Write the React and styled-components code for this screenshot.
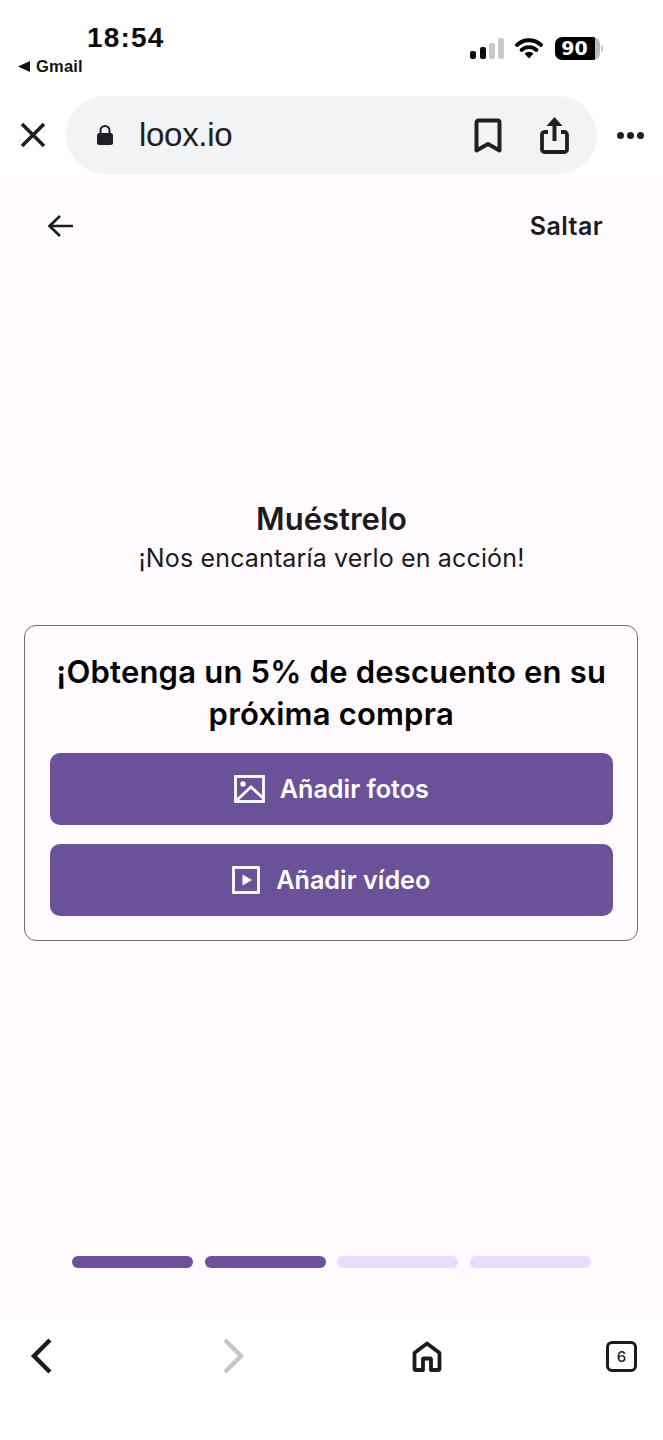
import React from 'react';
import styled, { createGlobalStyle } from 'styled-components';

const GlobalStyle = createGlobalStyle`
    html, body {
        margin: 0;
        padding: 0;
        background: #ffffff;
    }
    * {
        box-sizing: border-box;
    }
`;

const Screen = styled.div`
    width: 663px;
    height: 1440px;
    display: flex;
    flex-direction: column;
    font-family: Inter, "Liberation Sans", sans-serif;
    color: #1c1b1f;
    overflow: hidden;
`;

const StatusBar = styled.div`
    height: 96px;
    display: flex;
    justify-content: space-between;
    background: #ffffff;
`;

const StatusLeft = styled.div`
    display: flex;
    flex-direction: column;
    padding-top: 21px;
`;

const Time = styled.div`
    margin-left: 87px;
    font-family: "Liberation Sans", sans-serif;
    font-size: 28px;
    line-height: 33px;
    font-weight: 700;
    letter-spacing: 1.2px;
    color: #0d0d0d;
`;

const BackApp = styled.div`
    margin-left: 18px;
    margin-top: 3px;
    display: flex;
    align-items: center;
    gap: 5px;
    font-family: "Liberation Sans", sans-serif;
    font-size: 16.5px;
    letter-spacing: 0.2px;
    line-height: 19px;
    font-weight: 700;
    color: #141414;
`;

const StatusRight = styled.div`
    display: flex;
    align-items: center;
    height: 23px;
    margin-top: 37px;
    margin-right: 63px;
`;

const Wifi = styled.svg`
    margin: 0 12px 0 11px;
`;

const Battery = styled.div`
    position: relative;
    width: 45px;
    height: 23px;
    border-radius: 7px;
    background: linear-gradient(90deg, #000000 88%, #b9b9b9 88%);
    color: #ffffff;
    font-family: "DejaVu Sans", sans-serif;
    font-size: 19px;
    font-weight: 700;
    line-height: 23px;
    text-align: center;
    padding-right: 6px;

    &::after {
        content: '';
        position: absolute;
        top: 8px;
        right: -3px;
        width: 2px;
        height: 7px;
        border-radius: 0 2px 2px 0;
        background: #c9c9c9;
    }
`;

const Toolbar = styled.div`
    height: 81px;
    display: flex;
    align-items: flex-start;
    background: #ffffff;
`;

const CloseSlot = styled.div`
    width: 66px;
    height: 78px;
    display: flex;
    align-items: center;
    padding-left: 20px;
`;

const AddressPill = styled.div`
    width: 531px;
    height: 78px;
    border-radius: 39px;
    background: #f2f3f5;
    display: flex;
    align-items: center;
    padding: 0 28px 0 31px;
`;

const Domain = styled.div`
    margin-left: 26px;
    flex: 1;
    font-family: "Liberation Sans", sans-serif;
    font-size: 33px;
    letter-spacing: -0.3px;
    color: #1f2024;
`;

const PillActions = styled.div`
    display: flex;
    align-items: center;
    gap: 38px;
`;

const MoreSlot = styled.div`
    flex: 1;
    height: 78px;
    display: flex;
    align-items: center;
    justify-content: center;
    gap: 3px;
`;

const Dot = styled.span`
    width: 7px;
    height: 7px;
    border-radius: 50%;
    background: #1f2024;
`;

const Page = styled.main`
    flex: 1;
    display: flex;
    flex-direction: column;
    background: #fffbff;
`;

const TopRow = styled.div`
    display: flex;
    align-items: center;
    justify-content: space-between;
    height: 32px;
    margin-top: 33px;
    padding: 0 60px 0 47px;
`;

const Skip = styled.div`
    font-size: 25px;
    letter-spacing: 0.4px;
    font-weight: 600;
    color: #1c1b1f;
`;

const Title = styled.h1`
    margin: 258px 0 0;
    font-size: 31px;
    line-height: 38px;
    font-weight: 600;
    text-align: center;
    color: #1c1b1f;
`;

const Subtitle = styled.p`
    margin: 3px 0 0;
    font-size: 25px;
    letter-spacing: 0.15px;
    line-height: 34px;
    font-weight: 400;
    text-align: center;
    color: #1c1b1f;
`;

const Card = styled.section`
    margin: 50px 25px 0 24px;
    height: 316px;
    padding: 25px 24px 0 24.5px;
    border: 1.5px solid #6f6a75;
    border-radius: 12px;
    display: flex;
    flex-direction: column;
`;

const CardTitle = styled.h2`
    margin: 0 0 18px;
    font-size: 31px;
    letter-spacing: 0.2px;
    line-height: 42px;
    font-weight: 600;
    text-align: center;
    color: #000000;
`;

const ActionButton = styled.button`
    height: 72px;
    flex: none;
    margin-bottom: 19px;
    border: 0;
    border-radius: 10px;
    background: #6b5198;
    color: #ffffff;
    font-family: inherit;
    font-size: 25.2px;
    font-weight: 600;
    display: flex;
    align-items: center;
    justify-content: center;
    gap: ${(p) => p.$gap}px;
`;

const Progress = styled.div`
    margin: 315px 72px 0;
    display: grid;
    grid-template-columns: repeat(4, 121px);
    justify-content: space-between;
`;

const Step = styled.div`
    height: 12px;
    border-radius: 6px;
    background: ${(p) => (p.$done ? '#6b5198' : '#eadcfb')};
`;

const BottomBar = styled.nav`
    height: 119px;
    background: #ffffff;
    display: flex;
    align-items: flex-start;
    justify-content: space-between;
    padding: 13px 26px 0 30px;
`;

const NavSlot = styled.div`
    width: ${(p) => p.$w}px;
    height: 44px;
    margin-left: ${(p) => p.$ml || 0}px;
    display: flex;
    align-items: center;
    justify-content: center;
`;

const TabCount = styled.div`
    width: 31px;
    height: 31px;
    border: 3px solid #1c1c1c;
    border-radius: 6px;
    font-size: 15px;
    font-weight: 500;
    line-height: 25px;
    text-align: center;
    color: #1c1c1c;
`;

const App = () => {
    return (
        <Screen>
            <GlobalStyle />
            <StatusBar>
                <StatusLeft>
                    <Time>18:54</Time>
                    <BackApp>
                        <svg width="13" height="11" viewBox="0 0 13 11">
                            <path d="M0 5.5 12 0v11z" fill="#141414" />
                        </svg>
                        Gmail
                    </BackApp>
                </StatusLeft>
                <StatusRight>
                    <svg width="34" height="21" viewBox="0 0 34 21">
                        <rect x="0" y="13" width="6" height="8" rx="2" fill="#0d0d0d" />
                        <rect x="10" y="9" width="6" height="12" rx="2" fill="#0d0d0d" />
                        <rect x="19" y="5" width="6" height="16" rx="2" fill="#c9c9c9" />
                        <rect x="28" y="0" width="6" height="21" rx="2" fill="#c9c9c9" />
                    </svg>
                    <Wifi width="28" height="21" viewBox="0 0 28 21">
                        <path d="M2 7a17.500 17.500 0 0 1 24 0" fill="none" stroke="#000" strokeWidth="3.800" strokeLinecap="round" />
                        <path d="M6.500 12a11 11 0 0 1 15 0" fill="none" stroke="#000" strokeWidth="3.800" strokeLinecap="round" />
                        <path d="M9.500 15.500a7 7 0 0 1 9 0L14 20.500z" fill="#000" />
                    </Wifi>
                    <Battery>90</Battery>
                </StatusRight>
            </StatusBar>

            <Toolbar>
                <CloseSlot>
                    <svg width="26" height="26" viewBox="0 0 26 26">
                        <path d="M2 2l22 22M24 2 2 24" stroke="#1f2024" strokeWidth="3.600" fill="none" />
                    </svg>
                </CloseSlot>
                <AddressPill>
                    <svg width="16" height="20" viewBox="0 0 16 20">
                        <path d="M3.500 9V5.500a4.500 4.500 0 0 1 9 0V9" fill="none" stroke="#1f2024" strokeWidth="2" />
                        <rect x="0" y="8" width="16" height="12" rx="2.500" fill="#1f2024" />
                    </svg>
                    <Domain>loox.io</Domain>
                    <PillActions>
                        <svg width="28" height="35" viewBox="0 0 28 35">
                            <path d="M2.500 32.500V4.500a2 2 0 0 1 2-2h19a2 2 0 0 1 2 2v28L14 26z" fill="none" stroke="#1f2024" strokeWidth="4" strokeLinejoin="round" />
                        </svg>
                        <svg width="29" height="37" viewBox="0 0 29 37">
                            <path d="M8 15H4A2.500 2.500 0 0 0 2 17.500v15A2.500 2.500 0 0 0 4.500 35h20a2.500 2.500 0 0 0 2.500-2.500v-15a2.500 2.500 0 0 0-2.500-2.500H21" fill="none" stroke="#1f2024" strokeWidth="3.800" />
                            <path d="M14.500 24V6" stroke="#1f2024" strokeWidth="4" fill="none" />
                            <path d="M14.500 0l8 9h-16z" fill="#1f2024" />
                        </svg>
                    </PillActions>
                </AddressPill>
                <MoreSlot>
                    <Dot />
                    <Dot />
                    <Dot />
                </MoreSlot>
            </Toolbar>

            <Page>
                <TopRow>
                    <svg width="27" height="24" viewBox="0 0 27 24">
                        <path d="M26 12H3M13 2 2.500 12 13 22" fill="none" stroke="#1c1b1f" strokeWidth="2.600" />
                    </svg>
                    <Skip>Saltar</Skip>
                </TopRow>
                <Title>Muéstrelo</Title>
                <Subtitle>¡Nos encantaría verlo en acción!</Subtitle>
                <Card>
                    <CardTitle>¡Obtenga un 5% de descuento en su próxima compra</CardTitle>
                    <ActionButton $gap={15}>
                        <svg width="31" height="28" viewBox="0 0 31 28">
                            <rect x="1.500" y="1.500" width="28" height="25" fill="none" stroke="#fff" strokeWidth="2.800" />
                            <circle cx="9" cy="9" r="2.700" fill="#fff" />
                            <path d="M3 25 17 12l12 11" fill="none" stroke="#fff" strokeWidth="2.800" />
                        </svg>
                        Añadir fotos
                    </ActionButton>
                    <ActionButton $gap={16}>
                        <svg width="28" height="28" viewBox="0 0 28 28">
                            <rect x="1.500" y="1.500" width="25" height="25" fill="none" stroke="#fff" strokeWidth="2.800" />
                            <path d="M10.500 8.500 20 14l-9.500 5.500z" fill="#fff" />
                        </svg>
                        Añadir vídeo
                    </ActionButton>
                </Card>
                <Progress>
                    <Step $done />
                    <Step $done />
                    <Step />
                    <Step />
                </Progress>
            </Page>

            <BottomBar>
                <NavSlot $w={24}>
                    <svg width="24" height="36" viewBox="0 0 24 36">
                        <path d="M20 2 4 18l16 16" fill="none" stroke="#1c1c1c" strokeWidth="4.400" />
                    </svg>
                </NavSlot>
                <NavSlot $w={24} $ml={3}>
                    <svg width="24" height="36" viewBox="0 0 24 36">
                        <path d="M4 2l16 16L4 34" fill="none" stroke="#c4c6c7" strokeWidth="4.400" />
                    </svg>
                </NavSlot>
                <NavSlot $w={30} $ml={3}>
                    <svg width="30" height="31" viewBox="0 0 30 31">
                        <path d="M15 2.500 3 11.500a1.500 1.500 0 0 0-.5 1V27.500a1.500 1.500 0 0 0 1.500 1.500h7V18.500a1 1 0 0 1 1-1h6a1 1 0 0 1 1 1V29h7a1.500 1.500 0 0 0 1.500-1.500v-15a1.500 1.500 0 0 0-.5-1z" fill="none" stroke="#1c1c1c" strokeWidth="3.800" strokeLinejoin="round" />
                    </svg>
                </NavSlot>
                <NavSlot $w={31}>
                    <TabCount>6</TabCount>
                </NavSlot>
            </BottomBar>
        </Screen>
    );
};

export default App;
